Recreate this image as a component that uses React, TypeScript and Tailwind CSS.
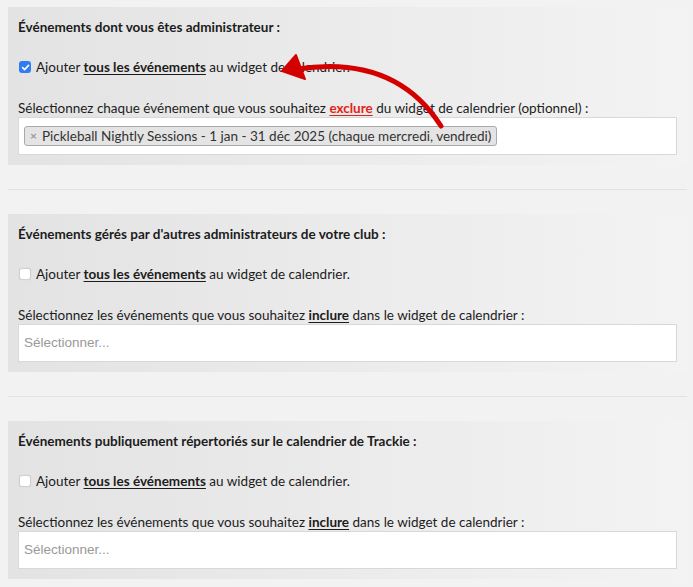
import React from "react";

type Section = {
  title: string;
  checked: boolean;
  exclude: boolean;
  tags: string[];
};

const sections: Section[] = [
  {
    title: "Événements dont vous êtes administrateur :",
    checked: true,
    exclude: true,
    tags: ["Pickleball Nightly Sessions - 1 jan - 31 déc 2025 (chaque mercredi, vendredi)"],
  },
  {
    title: "Événements gérés par d'autres administrateurs de votre club :",
    checked: false,
    exclude: false,
    tags: [],
  },
  {
    title: "Événements publiquement répertoriés sur le calendrier de Trackie :",
    checked: false,
    exclude: false,
    tags: [],
  },
];

function Checkbox({ checked }: { checked: boolean }) {
  if (checked) {
    return (
      <span className="block w-[12px] h-[12px] rounded-[3px] bg-[#2f7cf6] flex items-center justify-center flex-shrink-0">
        <svg width="9" height="9" viewBox="0 0 10 10">
          <path d="M1.8 5.2 L4 7.4 L8.4 2.6" stroke="white" strokeWidth="1.8" fill="none" strokeLinecap="round" strokeLinejoin="round" />
        </svg>
      </span>
    );
  }
  return <span className="block w-[12px] h-[12px] rounded-[3px] bg-white border border-[#d0d0d0] shadow-[0_0_1px_rgba(0,0,0,0.15)] flex-shrink-0" />;
}

function Panel({ s }: { s: Section }) {
  return (
    <div className="h-[158px] px-[10px] pt-[10px] bg-gradient-to-r from-[#e3e3e3] via-[#ebebeb] to-[#f3f3f3]">
      <div className="h-5 leading-5 font-bold text-[13.5px] text-[#1c1c1c]">{s.title}</div>
      {/* Checkbox row */}
      <div className="mt-5 h-5 flex items-center gap-[5px] text-[13.5px] text-[#1c1c1c]">
        <span className="ml-[1px] block">
          <Checkbox checked={s.checked} />
        </span>
        <span>
          Ajouter <b className="underline underline-offset-2">tous les événements</b> au widget de calendrier.
        </span>
      </div>
      {/* Label */}
      <div className="mt-[22px] h-[18px] leading-[18px] text-[13.5px] text-[#1c1c1c]">
        {s.exclude ? (
          <>
            Sélectionnez chaque événement que vous souhaitez{" "}
            <b className="underline underline-offset-2 text-[#e2231a]">exclure</b> du widget de calendrier (optionnel) :
          </>
        ) : (
          <>
            Sélectionnez les événements que vous souhaitez{" "}
            <b className="underline underline-offset-2">inclure</b> dans le widget de calendrier :
          </>
        )}
      </div>
      {/* Select box */}
      <div className="h-[38px] bg-white border border-[#d8d8d8] flex items-center px-[5px]">
        {s.tags.length > 0 ? (
          s.tags.map((t) => (
            <span
              key={t}
              className="h-5 flex items-center gap-[5px] px-[5px] bg-[#e4e4e4] border border-[#aaaaaa] rounded-[3px] text-[13.5px] text-[#333]"
            >
              <span className="text-[#999] font-bold text-[12px]">×</span>
              {t}
            </span>
          ))
        ) : (
          <span className="text-[13.5px] text-[#999] [font-family:'Liberation_Sans',Arial,sans-serif]">
            Sélectionner...
          </span>
        )}
      </div>
    </div>
  );
}

export default function App() {
  return (
    <div className="relative w-[693px] h-[587px] overflow-hidden bg-[#f2f2f2] pt-[7px] pl-2 pr-[6px] [font-family:Lato,'Open_Sans',sans-serif]">
      {sections.map((s, i) => (
        <div key={i}>
          {i > 0 && <div className="my-6 h-px bg-[#e2e2e2]" />}
          <Panel s={s} />
        </div>
      ))}

      {/* Red annotation arrow */}
      <svg className="absolute left-0 top-0 pointer-events-none" width="693" height="587">
        <path d="M297 69 Q395 54 441 126" stroke="#d40000" strokeWidth="5" fill="none" strokeLinecap="round" />
        <path d="M282 71 L296 55 L305 79 Z" fill="#d40000" stroke="#d40000" strokeWidth="2" strokeLinejoin="round" />
      </svg>
    </div>
  );
}
